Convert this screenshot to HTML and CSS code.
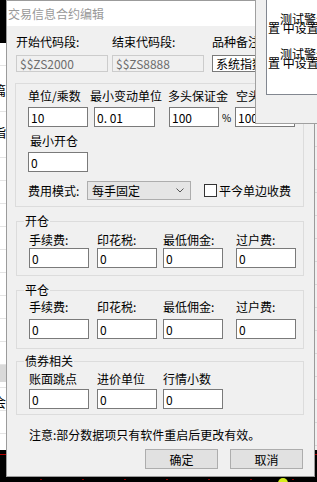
FILE: index.html
```html
<!DOCTYPE html>
<html lang="zh-CN">
<head>
    <meta charset="UTF-8">
    <meta name="viewport" content="width=device-width, initial-scale=1.0">
    <title>交易信息合约编辑</title>
    <link rel="stylesheet" href="styles.css">
</head>
<body>
    <div class="bg-left">
        <div class="bg-sheet">
            <span class="bg-char ch-1">篇</span>
            <span class="bg-char ch-2">指</span>
            <div class="bg-band"></div>
            <span class="bg-char ch-3">会</span>
        </div>
        <div class="bg-red"></div>
    </div>
    <div class="bg-right">
        <div class="bg-sheet"></div>
        <div class="bg-red"></div>
    </div>
    <div class="bg-bottom"><span class="bg-dot"></span></div>

    <div class="dialog">
        <div class="titlebar">交易信息合约编辑</div>
        <div class="dlg-body">
            <div class="code-row">
                <div class="cell">
                    <span class="lbl">开始代码段:</span>
                    <input class="field field-code" type="text" value="$$ZS2000" disabled>
                </div>
                <div class="cell">
                    <span class="lbl">结束代码段:</span>
                    <input class="field field-code" type="text" value="$$ZS8888" disabled>
                </div>
                <div class="cell">
                    <span class="lbl">品种备注:</span>
                    <input class="field field-code field-note" type="text" value="系统指数">
                </div>
            </div>

            <div class="group group-main">
                <div class="param-row">
                    <div class="cell pc1">
                        <span class="lbl">单位/乘数</span>
                        <input class="field field-num" type="text" value="10">
                    </div>
                    <div class="cell pc2">
                        <span class="lbl">最小变动单位</span>
                        <input class="field field-num field-tick" type="text" value="0. 01">
                    </div>
                    <div class="cell pc3">
                        <span class="lbl">多头保证金</span>
                        <div class="with-unit">
                            <input class="field field-num field-margin" type="text" value="100">
                            <span class="unit">%</span>
                        </div>
                    </div>
                    <div class="cell pc4">
                        <span class="lbl">空头保证金</span>
                        <input class="field field-num field-short" type="text" value="100">
                    </div>
                </div>
                <div class="cell min-open">
                    <span class="lbl lbl-indent">最小开仓</span>
                    <input class="field field-num" type="text" value="0">
                </div>
                <div class="fee-mode">
                    <span class="lbl mode-lbl">费用模式:</span>
                    <div class="combo">
                        <span>每手固定</span>
                        <svg class="chevron" width="8" height="5" viewBox="0 0 8 5"><polyline points="0.5,0.5 4,4 7.5,0.5" fill="none" stroke="#555" stroke-width="1"/></svg>
                    </div>
                    <span class="checkbox"></span>
                    <span class="lbl">平今单边收费</span>
                </div>
            </div>

            <div class="group group-fee group-open">
                <span class="caption">开仓</span>
                <span class="lbl">手续费:</span>
                <span class="lbl">印花税:</span>
                <span class="lbl">最低佣金:</span>
                <span class="lbl">过户费:</span>
                <input class="field field-num" type="text" value="0">
                <input class="field field-num" type="text" value="0">
                <input class="field field-num" type="text" value="0">
                <input class="field field-num" type="text" value="0">
            </div>

            <div class="group group-fee group-close">
                <span class="caption">平仓</span>
                <span class="lbl">手续费:</span>
                <span class="lbl">印花税:</span>
                <span class="lbl">最低佣金:</span>
                <span class="lbl">过户费:</span>
                <input class="field field-num" type="text" value="0">
                <input class="field field-num" type="text" value="0">
                <input class="field field-num" type="text" value="0">
                <input class="field field-num" type="text" value="0">
            </div>

            <div class="group group-fee group-bond">
                <span class="caption">债券相关</span>
                <span class="lbl">账面跳点</span>
                <span class="lbl">进价单位</span>
                <span class="lbl">行情小数</span>
                <span></span>
                <input class="field field-num" type="text" value="0">
                <input class="field field-num" type="text" value="0">
                <input class="field field-num" type="text" value="0">
            </div>

            <p class="note">注意:部分数据项只有软件重启后更改有效。</p>

            <div class="actions">
                <button class="btn" type="button">确定</button>
                <button class="btn" type="button">取消</button>
            </div>
        </div>
    </div>

    <div class="tip">
        <div class="tip-box">
            <div class="tip-line tip-top">测试警告</div>
            <div class="tip-line">置 中设置</div>
            <div class="tip-line tip-top tip-second">测试警告</div>
            <div class="tip-line">置 中设置</div>
        </div>
    </div>
</body>
</html>
```

FILE: styles.css
```css
body {
    margin: 0;
    width: 317px;
    height: 482px;
    overflow: hidden;
    position: relative;
    background-color: #000;
    font-family: 'Noto Sans CJK SC', 'Microsoft YaHei', sans-serif;
    font-size: 12px;
    color: #000;
}

/* things behind the dialog */
.bg-left {
    position: absolute;
    left: 0;
    top: 43px;
    width: 6px;
    height: 420px;
    overflow: hidden;
}

.bg-right {
    position: absolute;
    left: 314px;
    top: 124px;
    width: 3px;
    height: 339px;
    overflow: hidden;
}

.bg-sheet {
    height: 407px;
    background: repeating-linear-gradient(to bottom, #fff 0, #fff 22px, #e4e4e4 22px, #e4e4e4 23px);
    display: flex;
    flex-direction: column;
    align-items: flex-start;
}

.bg-right .bg-sheet {
    height: 326px;
    background: repeating-linear-gradient(to bottom, #f0f0f0 0, #f0f0f0 22px, #d8d8d8 22px, #d8d8d8 23px);
}

.bg-char {
    display: block;
    margin-left: -7px;
    line-height: 14px;
    font-size: 13px;
    background: #fff;
}

.ch-1 { margin-top: 40px; }
.ch-2 { margin-top: 28px; }
.ch-3 { margin-top: 13px; background: transparent; }

.bg-band {
    margin-top: 226px;
    width: 100%;
    height: 17px;
    background-color: #d9d9d9;
}

.bg-red {
    margin-top: 4px;
    height: 1px;
    background-color: #b00000;
}

.bg-bottom {
    position: absolute;
    left: 0;
    top: 479px;
    width: 317px;
    height: 1px;
    background: repeating-linear-gradient(to right, transparent 0, transparent 40px, #8a0000 40px, #8a0000 42px);
}

.bg-dot {
    position: absolute;
    left: 278px;
    top: -1px;
    width: 10px;
    height: 10px;
    border-radius: 50%;
    background-color: #d6ee1c;
}

/* dialog window */
.dialog {
    position: absolute;
    left: 6px;
    top: 0;
    width: 309px;
    height: 477px;
    box-sizing: border-box;
    border: 1px solid #9b9b9b;
    background-color: #f0f0f0;
}

.titlebar {
    height: 25px;
    line-height: 25px;
    padding-left: 1px;
    background-color: #fff;
    color: #999;
}

.dlg-body {
    padding: 8px 10px 0 9px;
    white-space: nowrap;
}

.lbl {
    display: block;
    height: 16px;
    line-height: 16px;
}

.cell {
    display: flex;
    flex-direction: column;
    align-items: flex-start;
}

.field {
    box-sizing: border-box;
    height: 20px;
    margin: 0;
    padding: 0 2px;
    border: 1px solid #7a7a7a;
    background-color: #fff;
    font-family: 'Noto Sans CJK SC', sans-serif;
    font-size: 12px;
    color: #000;
    outline: none;
}

.code-row {
    display: grid;
    grid-template-columns: 96px 100px 1fr;
}

.field-code {
    width: 92px;
    height: 17px;
    margin-top: 5px;
    padding: 0 3px;
}

.field-code:disabled {
    background-color: #f0f0f0;
    border-color: #cccccc;
    color: #6d6d6d;
}

.field-num {
    width: 60px;
    margin-top: 3px;
}

/* box without title */
.group {
    position: relative;
    border: 1px solid #dcdcdc;
}

.group-main {
    margin: 11px 0 0 -1px;
    padding: 4px 0 6px 12px;
}

.param-row {
    display: flex;
}

.pc1 { width: 62px; }
.pc2 { width: 78px; }
.pc3 { width: 68px; }

.field-tick {
    width: 61px;
    margin-left: 4px;
}

.with-unit {
    display: flex;
    align-items: center;
    margin-left: 1px;
}

.field-margin {
    width: 50px;
}

.unit {
    margin: 3px 0 0 3px;
    font-size: 10px;
}

.field-short {
    margin-left: -1px;
}

.min-open {
    margin-top: 6px;
}

.lbl-indent {
    padding-left: 2px;
}

.fee-mode {
    display: flex;
    align-items: center;
    height: 19px;
    margin-top: 9px;
}

.mode-lbl {
    width: 59px;
}

.combo {
    box-sizing: border-box;
    width: 104px;
    height: 19px;
    display: flex;
    align-items: center;
    justify-content: space-between;
    padding: 0 6px 0 4px;
    border: 1px solid #adadad;
    background-color: #e5e5e5;
}

.checkbox {
    box-sizing: border-box;
    width: 13px;
    height: 13px;
    margin: 0 2px 0 13px;
    border: 1px solid #333;
    background-color: #fff;
}

.group-fee {
    display: grid;
    grid-template-columns: 68px 66px 73px 1fr;
    margin-left: 0;
    padding-left: 12px;
}

.group-fee .field-num {
    margin-top: 0;
}

.group-open {
    margin-top: 14px;
    padding-top: 10px;
    padding-bottom: 7px;
}

.group-close {
    margin-top: 14px;
    padding-top: 8px;
    padding-bottom: 9px;
    row-gap: 4px;
}

.group-bond {
    margin-top: 12px;
    padding-top: 9px;
    padding-bottom: 5px;
    row-gap: 2px;
}

.caption {
    position: absolute;
    top: -7px;
    left: 7px;
    padding: 0 1px;
    line-height: 12px;
    background-color: #f0f0f0;
}

.note {
    margin: 12px 0 0;
    padding-left: 13px;
    line-height: 16px;
}

.actions {
    display: flex;
    justify-content: flex-end;
    gap: 12px;
    margin-top: 6px;
    padding-right: 1px;
}

.btn {
    box-sizing: border-box;
    width: 73px;
    height: 20px;
    padding: 0;
    border: 1px solid #adadad;
    background-color: #e1e1e1;
    font-family: 'Noto Sans CJK SC', sans-serif;
    font-size: 12px;
    color: #000;
}

/* popup on top of the dialog */
.tip {
    position: absolute;
    left: 255px;
    top: 0;
    width: 62px;
    height: 124px;
    box-sizing: border-box;
    padding-left: 10px;
    border-left: 1px solid #a0a0a0;
    border-bottom: 1px solid #a0a0a0;
    background-color: #f0f0f0;
}

.tip-box {
    height: 95px;
    box-sizing: border-box;
    padding-top: 14px;
    border-left: 1px solid #828790;
    border-bottom: 1px solid #828790;
    background-color: #fff;
    overflow: hidden;
    white-space: nowrap;
}

.tip-line {
    line-height: 9px;
    height: 9px;
    padding-left: 1px;
}

.tip-top {
    padding-left: 13px;
}

.tip-second {
    margin-top: 17px;
}
```
